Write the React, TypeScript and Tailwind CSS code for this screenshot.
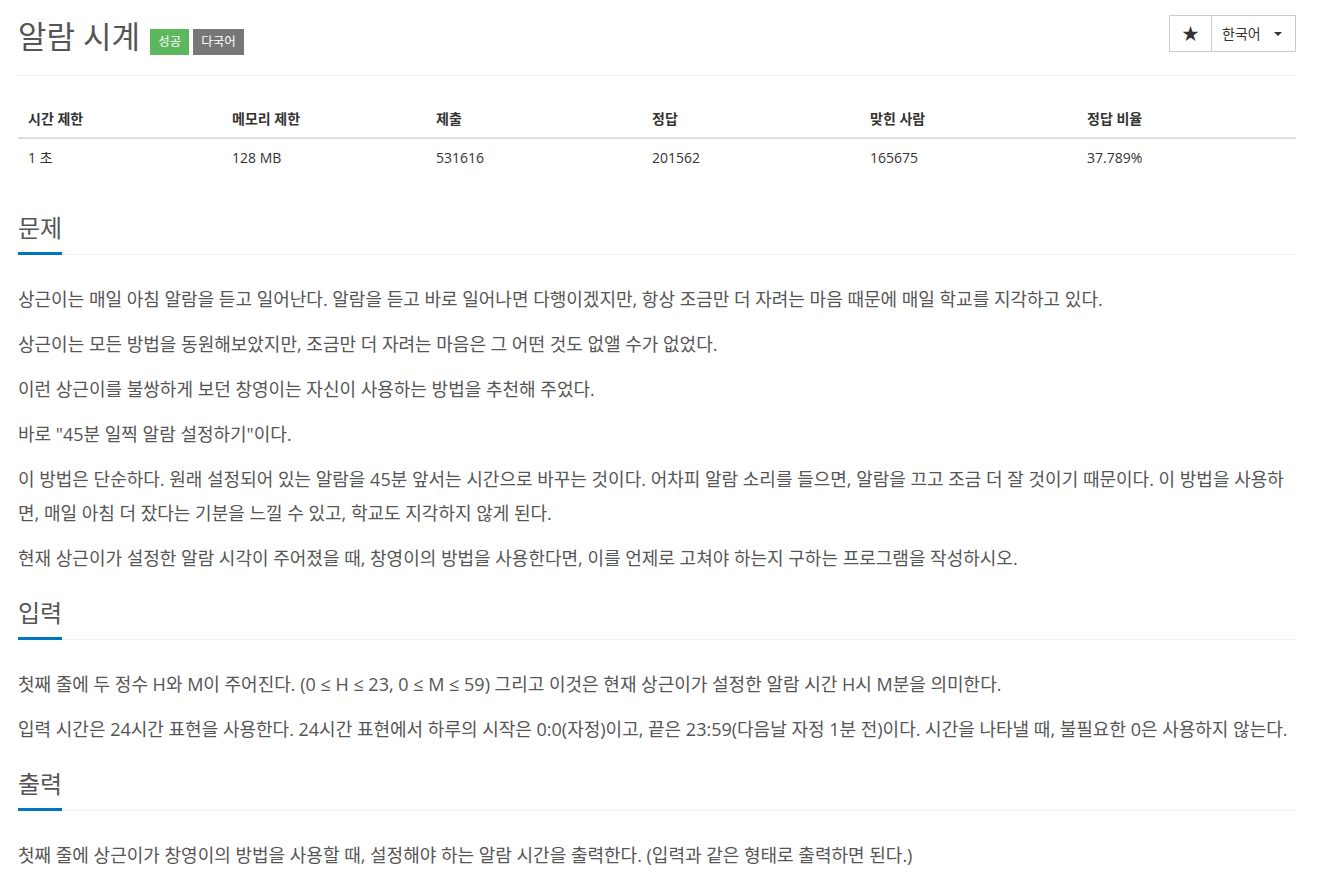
const font = { fontFamily: '"Open Sans", "Noto Sans CJK KR", sans-serif' };

const stats = [
  { label: '시간 제한', value: '1 초' },
  { label: '메모리 제한', value: '128 MB' },
  { label: '제출', value: '531616' },
  { label: '정답', value: '201562' },
  { label: '맞힌 사람', value: '165675' },
  { label: '정답 비율', value: '37.789%' },
];

function Section({ title, children }: { title: string; children: React.ReactNode }) {
  return (
    <section className="mt-[21px] first:mt-0">
      <div className="border-b border-dotted border-[#e4e9f0]">
        <h2 className="inline-block text-[24px] leading-[34px] pb-[7px] mb-[-1px] border-b-[3px] border-[#0076c0] text-[#555]">
          {title}
        </h2>
      </div>
      <div className="mt-[27px]">{children}</div>
    </section>
  );
}

function P({ children }: { children: React.ReactNode }) {
  return <p className="text-[18px] leading-[34px] mb-[11px] text-[#555]">{children}</p>;
}

export default function App() {
  return (
    <div className="bg-white min-h-[879px] pl-[18px] pr-[28px]" style={font}>
      {/* Page header */}
      <div className="flex items-start justify-between pt-[15px] pb-[20px] border-b border-[#eee]">
        <div className="flex items-end gap-[4px] pt-[2px]">
          <h1 className="text-[31px] leading-[38px] text-[#555] mr-[6px]">알람 시계</h1>
          <span className="bg-[#5cb85c] text-white text-[12.5px] leading-[26px] px-[8px]">성공</span>
          <span className="bg-[#777] text-white text-[12.5px] leading-[26px] px-[8px]">다국어</span>
        </div>
        <div className="flex border border-[#ccc] h-[37px] text-[#333]">
          <div className="w-[42px] flex items-center justify-center border-r border-[#ccc] text-[17px]">★</div>
          <div className="w-[83px] flex items-center pl-[10px] gap-[13px] text-[14px]">
            <span>한국어</span>
            <span className="w-0 h-0 border-l-[4px] border-r-[4px] border-t-[4px] border-l-transparent border-r-transparent border-t-[#333]" />
          </div>
        </div>
      </div>

      {/* Stats table */}
      <div className="mt-[25px] text-[14px] text-[#333]">
        <div className="grid grid-cols-[204px_204px_216px_218px_217px_1fr] font-bold border-b-2 border-[#ddd]">
          {stats.map((s) => (
            <div key={s.label} className="px-[10px] py-[8px] leading-[20px]">{s.label}</div>
          ))}
        </div>
        <div className="grid grid-cols-[204px_204px_216px_218px_217px_1fr]">
          {stats.map((s) => (
            <div key={s.label} className="px-[10px] py-[9px] leading-[20px]">{s.value}</div>
          ))}
        </div>
      </div>

      <div className="mt-[34px]">
        <Section title="문제">
          <P>상근이는 매일 아침 알람을 듣고 일어난다. 알람을 듣고 바로 일어나면 다행이겠지만, 항상 조금만 더 자려는 마음 때문에 매일 학교를 지각하고 있다.</P>
          <P>상근이는 모든 방법을 동원해보았지만, 조금만 더 자려는 마음은 그 어떤 것도 없앨 수가 없었다.</P>
          <P>이런 상근이를 불쌍하게 보던 창영이는 자신이 사용하는 방법을 추천해 주었다.</P>
          <P>바로 "45분 일찍 알람 설정하기"이다.</P>
          <P>이 방법은 단순하다. 원래 설정되어 있는 알람을 45분 앞서는 시간으로 바꾸는 것이다. 어차피 알람 소리를 들으면, 알람을 끄고 조금 더 잘 것이기 때문이다. 이 방법을 사용하면, 매일 아침 더 잤다는 기분을 느낄 수 있고, 학교도 지각하지 않게 된다.</P>
          <P>현재 상근이가 설정한 알람 시각이 주어졌을 때, 창영이의 방법을 사용한다면, 이를 언제로 고쳐야 하는지 구하는 프로그램을 작성하시오.</P>
        </Section>
        <Section title="입력">
          <P>첫째 줄에 두 정수 H와 M이 주어진다. (0 ≤ H ≤ 23, 0 ≤ M ≤ 59) 그리고 이것은 현재 상근이가 설정한 알람 시간 H시 M분을 의미한다.</P>
          <P>입력 시간은 24시간 표현을 사용한다. 24시간 표현에서 하루의 시작은 0:0(자정)이고, 끝은 23:59(다음날 자정 1분 전)이다. 시간을 나타낼 때, 불필요한 0은 사용하지 않는다.</P>
        </Section>
        <Section title="출력">
          <P>첫째 줄에 상근이가 창영이의 방법을 사용할 때, 설정해야 하는 알람 시간을 출력한다. (입력과 같은 형태로 출력하면 된다.)</P>
        </Section>
      </div>
    </div>
  );
}
